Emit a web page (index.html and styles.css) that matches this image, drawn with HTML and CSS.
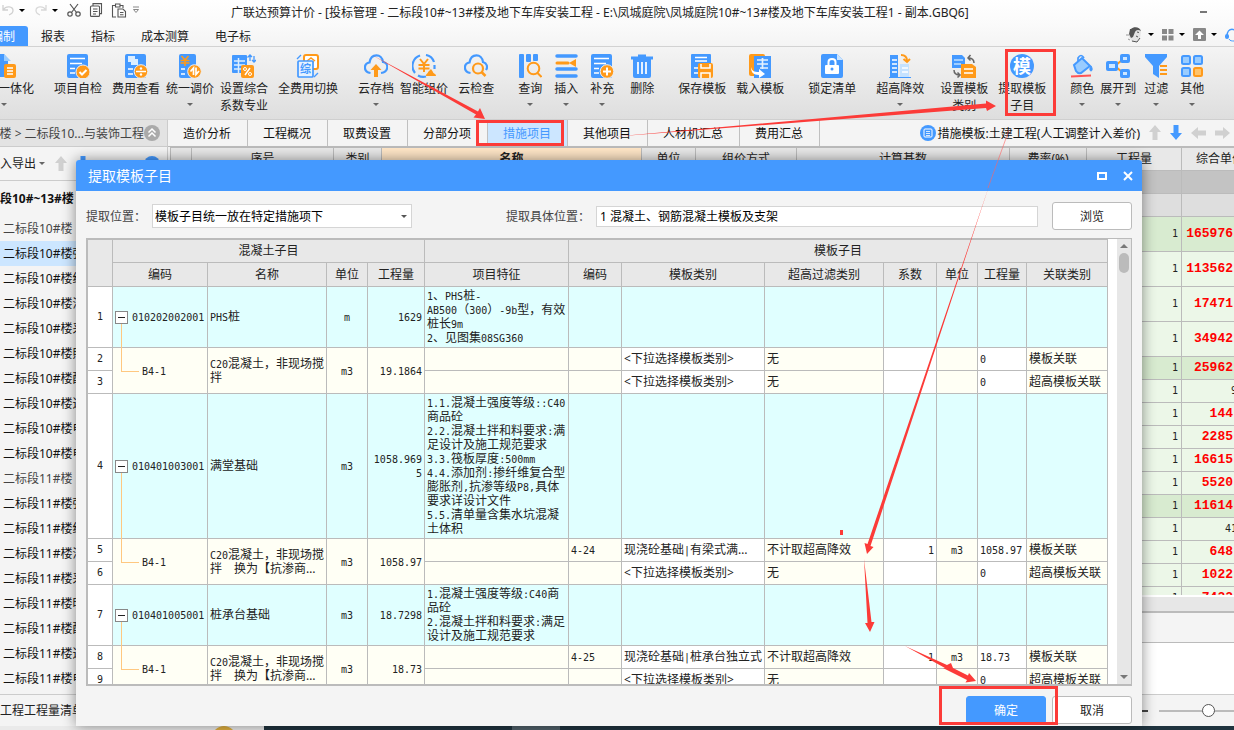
FILE: index.html
```html
<!DOCTYPE html>
<html lang="zh-CN">
<head>
<meta charset="utf-8">
<title>广联达预算计价</title>
<link rel="stylesheet" href="styles.css">
</head>
<body>
<div class="app">
  <header class="titlebar">
    <div class="quick">
      <button aria-label="撤销"><svg width="14" height="14" viewBox="0 0 14 14"><path d="M2 2v5h5M2.500 6.500C5 2.500 12 3 12 7.500c0 2-1.500 3.500-4 4.500" fill="none" stroke="#d0d0d0" stroke-width="1.300"/></svg></button>
      <i class="caret dark"></i>
      <button aria-label="恢复"><svg width="14" height="14" viewBox="0 0 14 14"><path d="M12 2v5H7M11.500 6.500C9 2.500 2 3 2 7.500c0 2 1.500 3.500 4 4.500" fill="none" stroke="#d8d8d8" stroke-width="1.300"/></svg></button>
      <i class="caret dark"></i>
      <button aria-label="剪切"><svg width="14" height="14" viewBox="0 0 14 14"><g fill="none" stroke="#555" stroke-width="1.200"><path d="M3 1l6.500 8.500M11 1L4.500 9.500"/><circle cx="3" cy="11" r="2.200"/><circle cx="11" cy="11" r="2.200"/></g></svg></button>
      <button aria-label="复制"><svg width="14" height="14" viewBox="0 0 14 14"><g fill="none" stroke="#555" stroke-width="1.100"><path d="M4 3V.600h8.500v10H11"/><rect x="1.500" y="3" width="9" height="10.400" rx="1"/><path d="M4 6h4.500M4 8.500h4.500M4 11h3"/></g></svg></button>
      <button aria-label="粘贴"><svg width="16" height="15" viewBox="0 0 16 15"><g fill="none" stroke="#555" stroke-width="1.100"><path d="M5 14H1.500V2.500h3M9 2.500h3V5M4.500 1h4.500v3H4.500z"/><path d="M7 6h5l2.500 2.500V14H7zM9 9.500h3.500M9 11.700h3.500"/></g></svg></button>
      <svg width="8" height="8" viewBox="0 0 8 8"><path d="M1 1h6M1.500 3.500h5L4 6.500z" fill="none" stroke="#888"/></svg>
    </div>
    <h1>广联达预算计价 - [投标管理 - 二标段10#~13#楼及地下车库安装工程 - E:\凤城庭院\凤城庭院10#~13#楼及地下车库安装工程1 - 副本.GBQ6]</h1>
    <button class="minimize" aria-label="最小化"></button>
  </header>

  <nav class="menubar">
    <a href="#" class="active">编制</a><a href="#">报表</a><a href="#">指标</a><a href="#">成本测算</a><a href="#">电子标</a>
    <div class="tools">
      <svg width="17" height="17" viewBox="0 0 17 17"><path d="M5 3c3-3 9-2 10 2l-1 7-3 4H6l-3-5z" fill="#e4e4e4"/><path d="M5 3c3-3 9-2 10 2-3-2-5-1-6 1L7 11l-2 1-2-4 1-5z" fill="#555"/><path d="M11 6l2 .500M10 10l2 1M6 15l5 1 3-4" stroke="#555" fill="none"/><path d="M0 9h3M2 13l2 1" stroke="#999"/></svg>
      <i class="caret dark"></i>
      <svg width="12" height="12" viewBox="0 0 12 12"><path d="M0 0h5v5H0zM6.500 0h5v5h-5zM0 6.500h5v5H0zM6.500 6.500h5v5h-5z" fill="#888"/></svg>
      <i class="caret dark"></i>
      <svg width="13" height="13" viewBox="0 0 13 13"><rect width="13" height="13" rx="1" fill="#888"/><path d="M6.500 2.500L11 7H8v4H5V7H2z" fill="#fff"/></svg>
      <i class="caret dark"></i>
      <svg width="14" height="14" viewBox="0 0 14 14"><path d="M2 8c0-9 10-9 10 0" fill="none" stroke="#49f" stroke-width="1.500"/><rect y="6" width="4" height="5" rx="2" fill="#49f"/><path d="M4 11c1 2 3 2 5 2" stroke="#49f" fill="none"/></svg>
    </div>
  </nav>

  <div class="ribbon">
    <button class="first"><svg viewBox="0 0 24 24"><path d="M2 0h10l4 5v18H2z" fill="#49f"/><path d="M12 0l7 7h-7z" fill="#9cf"/><rect x="12" y="10" width="12" height="14" rx="2" fill="#ff9a1a"/><path d="M15 14h6M15 17h6M15 20h6" stroke="#fff" stroke-width="1.500"/></svg><span>量价一体化</span><i class="caret"></i></button>
    <button class="g20"><svg viewBox="0 0 24 24"><rect x="1" width="21" height="24" rx="2" fill="#49f"/><path d="M4 4.500h15M4 9.500h12M4 14.500h5M4 19h5" stroke="#fff" stroke-width="1.600"/><circle cx="17" cy="18" r="7" fill="#ff9a1a" stroke="#eee"/><path d="M13.500 18l2.500 2.500 4.500-4.500" fill="none" stroke="#fff" stroke-width="2"/></svg><span>项目自检</span></button>
    <button class="g10"><svg viewBox="0 0 24 24"><rect x="1" width="21" height="24" rx="2" fill="#49f"/><path d="M4 2h7v3h3v6H7V8H4z" fill="#dceeff"/><path d="M4 15h5M4 20h5" stroke="#fff" stroke-width="1.600"/><circle cx="17" cy="17.500" r="6.800" fill="#ff9a1a" stroke="#eee"/><path d="M12 17.500h10" stroke="#fff" stroke-width="1.500"/><circle cx="17" cy="14.500" r="1.200" fill="#fff"/><circle cx="17" cy="20.500" r="1.200" fill="#fff"/></svg><span>费用查看</span></button>
    <button class="g6"><svg viewBox="0 0 24 24"><rect x="1" width="17" height="24" rx="2" fill="#49f"/><path d="M3.500 2l3.500 4 3.500-4M2.500 6.500h9M2.500 9h9M7 6v6" fill="none" stroke="#ff9a1a" stroke-width="1.600"/><path d="M3 15h4M3 20h4" stroke="#fff" stroke-width="1.600"/><circle cx="16.500" cy="17.500" r="6.800" fill="#ff9a1a" stroke="#eee"/><path d="M15.500 21v-7l-3 3.500M18 13.500v7l3-3.500" fill="none" stroke="#fff" stroke-width="1.700"/></svg><span>统一调价</span><i class="caret"></i></button>
    <button class="g6"><svg viewBox="0 0 24 24"><rect x="0" y="1" width="15" height="18" rx="1" fill="#49f"/><path d="M2 7h11M2 11h11M2 15h7M6.500 4v15" stroke="#dceeff" stroke-width="1.500"/><path d="M18 1v6M15.500 3.500L18 1l2 2M22 2v6M20 6l2 2 2-2" fill="none" stroke="#49f" stroke-width="1.300"/><rect x="9" y="11" width="13" height="13" rx="2" fill="#ff9a1a"/><path d="M13 21l5-7" stroke="#fff" stroke-width="1.500"/><circle cx="13" cy="15" r="1.500" fill="none" stroke="#fff"/><circle cx="18" cy="20" r="1.500" fill="none" stroke="#fff"/></svg><span>设置综合<br>系数专业</span></button>
    <button class="g10"><svg viewBox="0 0 24 24"><rect x="8" y="1" width="14" height="14" rx="2" fill="#fff" stroke="#ff9a1a" stroke-width="2"/><path d="M11 7l4-3 4 3M12 8h6" stroke="#ff9a1a" stroke-width="1.500" fill="none"/><rect x="2" y="7" width="15" height="16" rx="1" fill="#e6f2ff" stroke="#49f" stroke-width="1.700"/><text x="4" y="19" font-size="11" font-weight="700" fill="#49f">综</text><path d="M1 5l4-4M18 23l4-4" stroke="#49f" stroke-width="1.300"/></svg><span>全费用切换</span></button>
    <button class="g20"><svg viewBox="0 0 24 24"><path d="M6.500 19C-1 18-.500 9.500 5.500 8.500 7-1 18-1 19 8c6 1 6 10-2 11" fill="none" stroke="#49f" stroke-width="2.200"/><path d="M12 10l5.500 6H14v7h-4v-7H6.500z" fill="#ff9a1a"/></svg><span>云存档</span><i class="caret"></i></button>
    <button class="g6"><svg viewBox="0 0 24 24"><path d="M8 1.500A11 11 0 0 0 3 19M14 1a10.500 10.500 0 0 1 8 7M22.500 11v4M6 21.500a11 11 0 0 0 8 1" fill="none" stroke="#49f" stroke-width="2.200"/><path d="M8 5l4 5 4-5M6.500 11h11M6.500 14.500h11M12 10v8" fill="none" stroke="#ff9a1a" stroke-width="2"/><path d="M14 22c0-3 2-2 2-4l3-3 2 3c0 2 3 1 3 4z" fill="#ff9a1a"/></svg><span>智能组价</span></button>
    <button class="g10"><svg viewBox="0 0 24 24"><path d="M6.500 19C-1 18-.500 9.500 5.500 8.500 7-1 18-1 19 8c4 1 5 5 3 8" fill="none" stroke="#49f" stroke-width="2.200"/><circle cx="14" cy="14.500" r="5" fill="none" stroke="#ff9a1a" stroke-width="2.200"/><path d="M17.500 18l4 4" stroke="#ff9a1a" stroke-width="2.500"/></svg><span>云检查</span></button>
    <button class="g24"><svg viewBox="0 0 24 24"><rect x="1" width="5" height="24" rx="1" fill="#49f"/><rect x="8" width="5" height="8" rx="1" fill="#49f"/><rect x="15" width="5" height="7" rx="1" fill="#49f"/><circle cx="15.500" cy="14.500" r="5.800" fill="none" stroke="#ff9a1a" stroke-width="2"/><path d="M19.500 19l4 4" stroke="#ff9a1a" stroke-width="2"/></svg><span>查询</span><i class="caret"></i></button>
    <button class="g12"><svg viewBox="0 0 24 24"><path d="M3 2h19M3 15h19M3 22h19" stroke="#49f" stroke-width="3.500" stroke-linecap="round"/><path d="M3 9h11" stroke="#ff9a1a" stroke-width="3" stroke-linecap="round"/><path d="M15 9l7-4v8z" fill="#ff9a1a"/></svg><span>插入</span><i class="caret"></i></button>
    <button class="g12"><svg viewBox="0 0 24 24"><rect x="1" width="21" height="24" rx="2" fill="#49f"/><path d="M4 4.500h15M4 9.500h12M4 14.500h5M4 19h5" stroke="#fff" stroke-width="1.600"/><circle cx="17" cy="17.500" r="6.800" fill="#ff9a1a" stroke="#eee"/><path d="M17 13.500v8M13 17.500h8" stroke="#fff" stroke-width="2"/></svg><span>补充</span><i class="caret"></i></button>
    <button class="g16"><svg viewBox="0 0 24 24"><path d="M1 4h22M8 2h8" stroke="#49f" stroke-width="3"/><path d="M3 5h18v17q0 2-2 2H5q-2 0-2-2z" fill="#49f"/><path d="M8 8v12M12 8v12M16 8v12" stroke="#fff" stroke-width="1.700"/></svg><span>删除</span></button>
    <button class="g24"><svg viewBox="0 0 24 24"><rect x="1" width="20" height="24" rx="1" fill="#49f"/><path d="M5 3.500h12M5 7h12M4 14h4M4 19h4" stroke="#fff" stroke-width="1.500"/><rect x="8" y="9" width="15" height="15" rx="2" fill="#ff9a1a"/><path d="M11 10v4h9v-4M11 24v-5h9v5" fill="none" stroke="#fff" stroke-width="1.500"/></svg><span>保存模板</span></button>
    <button class="g10"><svg viewBox="0 0 24 24"><rect x="1" width="16" height="22" rx="2" fill="#ff9a1a"/><path d="M6 2h17v22H6z" fill="#49f"/><path d="M9 6h11M9 10h11M12 14h8M14.500 4v11" stroke="#e5f2ff" stroke-width="1.700"/><path d="M3 13c1 4 3 5 8 5v-3l6 5-6 4v-3C5 21 3 18 3 13z" fill="#fff"/></svg><span>载入模板</span></button>
    <button class="g24"><svg viewBox="0 0 24 24"><path d="M3 0h14l6 6v16q0 2-2 2H3q-2 0-2-2V2q0-2 2-2z" fill="#49f"/><path d="M17 0l6 6h-6z" fill="#cce5ff"/><rect x="5" y="11" width="14" height="9" rx="1" fill="#fff"/><path d="M8.500 11V8q0-3 3.500-3t3.500 3v3" fill="none" stroke="#fff" stroke-width="2"/><circle cx="12" cy="15" r="1.500" fill="#49f"/></svg><span>锁定清单</span></button>
    <button class="g20"><svg viewBox="0 0 24 24"><path d="M2 1h8v22H2z" fill="#49f"/><path d="M12 10h9v13h-9z" fill="#c5e2ff"/><path d="M4 6h5M4 10h5M4 14h5M4 18h5M14 14h6M14 18h6" stroke="#fff" stroke-width="1.700"/><path d="M1 23.500h22" stroke="#49f"/><path d="M13 1c4 0 6 2 6 6M15.500 5l3.500 3 3-3" fill="none" stroke="#ff9a1a" stroke-width="2"/></svg><span>超高降效</span><i class="caret"></i></button>
    <button class="g16"><svg viewBox="0 0 24 24"><path d="M0 1h10l3 3v10H0z" fill="#49f"/><path d="M2 6h9M2 10h7" stroke="#bde0ff" stroke-width="1.500"/><path d="M9 10h11l4 3v11H9z" fill="#ff9a1a"/><path d="M12 15h9M12 19h9" stroke="#fff" stroke-width="1.500"/><path d="M16 4c4 0 6 1 6 5M18.500 1L16 4l2.500 2.500M2 16c0 4 2 5 6 5M5.500 18.500L8 21l-2.500 2.500" fill="none" stroke="#666" stroke-width="1.500"/></svg><span>设置模板<br>类别</span></button>
    <button class="g10"><svg viewBox="0 0 24 24"><circle cx="12" cy="12" r="12" fill="#49f"/><text x="3" y="18.500" font-size="18" font-weight="700" fill="#fff">模</text></svg><span>提取模板<br>子目</span></button>
    <button class="g24"><svg viewBox="0 0 24 24"><path d="M4 11l8-7 8 8-9 7q-3 1-5-2z" fill="#9cf" stroke="#49f" stroke-width="2"/><path d="M8 8V4q3-5 6 0" fill="none" stroke="#49f" stroke-width="1.700"/><path d="M21 12c2 3 1 5 0 5s-2-2 0-5z" fill="#49f" stroke="#49f"/><path d="M1 22.500l20-1" stroke="#f55" stroke-width="2"/></svg><span>颜色</span><i class="caret"></i></button>
    <button class="g6"><svg viewBox="0 0 24 24"><path d="M9 12l7-6M9 12l7 6" stroke="#ff9a1a" stroke-width="2"/><rect x="0" y="7" width="12" height="10" rx="2" fill="#49f"/><rect x="14" y="0" width="10" height="9" rx="2" fill="#49f"/><rect x="14" y="15" width="10" height="9" rx="2" fill="#49f"/><path d="M3 10h6v4H3zM17 3h4v3h-4zM17 18h4v3h-4z" fill="#cfe7ff"/></svg><span>展开到</span><i class="caret"></i></button>
    <button class="g8"><svg viewBox="0 0 24 24"><path d="M1 0h22v3l-8 9v12l-6-4v-8L1 3z" fill="#49f"/><path d="M16 12h7M16 16h7M16 20h7" stroke="#ff9a1a" stroke-width="2"/></svg><span>过滤</span><i class="caret"></i></button>
    <button class="g12"><svg viewBox="0 0 24 24"><g fill="#9cf" stroke="#49f" stroke-width="2"><rect x="2" y="2" width="8" height="8" rx="1.500"/><rect x="14" y="2" width="8" height="8" rx="1.500"/><rect x="2" y="14" width="8" height="8" rx="1.500"/></g><rect x="14" y="14" width="8" height="8" rx="1.500" fill="#ffc36b" stroke="#ff9a1a" stroke-width="2"/></svg><span>其他</span><i class="caret"></i></button>
  </div>

  <div class="body">
    <aside class="side">
      <div class="crumb"><span>10#楼 &gt; 二标段10...与装饰工程</span><svg width="16" height="16" viewBox="0 0 16 16"><circle cx="8" cy="8" r="8" fill="#aaa"/><path d="M4.500 7.500L8 4l3.500 3.500M4.500 11.500L8 8l3.500 3.500" fill="none" stroke="#fff" stroke-width="1.500"/></svg></div>
      <div class="side-tools">
        <button class="io">导入导出<i class="caret"></i></button>
        <svg width="12" height="16" viewBox="0 0 12 16"><path d="M6 0l6 7H8.500v8h-5V7H0z" fill="#d0d0d0"/></svg>
        <svg width="12" height="16" viewBox="0 0 12 16"><path d="M6 16l6-7H8.500V0h-5v9H0z" fill="#49f"/></svg>
        <svg class="right" width="16" height="16" viewBox="0 0 16 16"><circle cx="8" cy="8" r="8" fill="#49f"/></svg>
      </div>
      <ul class="tree">
        <li class="root"><span>二标段10#~13#楼</span></li>
        <li class="dim">二标段10#楼</li>
        <li class="sel">二标段10#楼强电</li>
        <li>二标段10#楼给排水</li>
        <li>二标段10#楼消防</li>
        <li>二标段10#楼采暖</li>
        <li>二标段10#楼照明</li>
        <li>二标段10#楼配电</li>
        <li>二标段10#楼通风</li>
        <li>二标段10#楼电气</li>
        <li>二标段10#楼电梯</li>
        <li class="dim">二标段11#楼</li>
        <li>二标段11#楼强电</li>
        <li>二标段11#楼给排水</li>
        <li>二标段11#楼消防</li>
        <li>二标段11#楼采暖</li>
        <li>二标段11#楼明装</li>
        <li>二标段11#楼配电</li>
        <li>二标段11#楼通风</li>
        <li>二标段11#楼电气</li>
      </ul>
    </aside>

    <main class="main">
      <div class="tabs">
        <button>造价分析</button><button>工程概况</button><button>取费设置</button><button>分部分项</button><button class="on">措施项目</button><button>其他项目</button><button>人材机汇总</button><button>费用汇总</button>
        <div class="tpl">
          <svg width="16" height="16" viewBox="0 0 16 16"><circle cx="8" cy="8" r="8" fill="#49f"/><rect x="4" y="4" width="8" height="8" rx="1" fill="none" stroke="#fff"/><path d="M6 6.500h4M6 8.500h4M6 10.500h4" stroke="#fff" stroke-width=".8"/></svg>
          <span>措施模板:土建工程(人工调整计入差价)</span>
          <svg width="12" height="16" viewBox="0 0 12 16"><path d="M6 0l6 7H8.500v8h-5V7H0z" fill="#d0d0d0"/></svg>
          <svg width="12" height="16" viewBox="0 0 12 16"><path d="M6 15l6-7H8.500V0h-5v8H0z" fill="#49f"/></svg>
          <svg width="15" height="12" viewBox="0 0 15 12"><path d="M0 6l7-6v3.500h8v5H7V12z" fill="#d0d0d0"/></svg>
          <svg width="15" height="12" viewBox="0 0 15 12"><path d="M15 6L8 0v3.500H0v5h8V12z" fill="#d0d0d0"/></svg>
        </div>
      </div>
      <div class="sheet">
        <table>
          <colgroup><col class="s1"><col class="s2"><col class="s3"><col class="s4"><col class="s5"><col class="s6"><col class="s7"><col class="s8"><col class="s9"><col class="s10"></colgroup>
          <thead><tr><th></th><th>序号</th><th>类别</th><th class="name">名称</th><th>单位</th><th>组价方式</th><th>计算基数</th><th>费率(%)</th><th>工程量</th><th>综合单价</th></tr></thead>
          <tbody>
            <tr class="gray"><td colspan="8"></td><td></td><td></td></tr>
            <tr class="pale"><td colspan="8"></td><td></td><td></td></tr>
            <tr class="tall deep"><td colspan="8"></td><td>1</td><td class="red">165976</td></tr>
            <tr class="tall"><td colspan="8"></td><td>1</td><td class="red">113562</td></tr>
            <tr class="tall"><td colspan="8"></td><td>1</td><td class="red">17471</td></tr>
            <tr class="tall"><td colspan="8"></td><td>1</td><td class="red">34942</td></tr>
            <tr class="deep"><td colspan="8"></td><td>1</td><td class="red">25962</td></tr>
            <tr><td colspan="8"></td><td>1</td><td class="cut">9</td></tr>
            <tr><td colspan="8"></td><td>1</td><td class="red">144</td></tr>
            <tr><td colspan="8"></td><td>1</td><td class="red">2285</td></tr>
            <tr><td colspan="8"></td><td>1</td><td class="red">16615</td></tr>
            <tr><td colspan="8"></td><td>1</td><td class="red">5520</td></tr>
            <tr class="deep"><td colspan="8"></td><td>1</td><td class="red">11614</td></tr>
            <tr><td colspan="8"></td><td>1</td><td class="cut">41</td></tr>
            <tr><td colspan="8"></td><td>1</td><td class="red">648</td></tr>
            <tr><td colspan="8"></td><td>1</td><td class="red">1022</td></tr>
            <tr><td colspan="8"></td><td>1</td><td class="red">7422</td></tr>
          </tbody>
        </table>
      </div>
      <div class="hscroll"></div>
      <div class="strip"></div>
      <div class="detail"></div>
    </main>
  </div>

  <footer class="status"><span class="st">建筑工程工程量清单</span><div class="zoom"><i></i><input type="range" value="50" aria-label="缩放"></div></footer>
  <div class="taskbar"><i class="gold"></i><i class="task"></i></div>

  <section class="dialog" role="dialog" aria-labelledby="dt">
    <header><h2 id="dt">提取模板子目</h2><button aria-label="最大化"><svg width="10" height="8" viewBox="0 0 10 8"><path d="M1 1h8v6H1z" fill="none" stroke="#fff" stroke-width="2"/></svg></button><button aria-label="关闭"><svg width="10" height="10" viewBox="0 0 10 10"><path d="M1 1l8 8M9 1L1 9" stroke="#fff" stroke-width="2"/></svg></button></header>
    <div class="form">
      <label for="pos">提取位置：</label>
      <div class="pick"><select id="pos"><option>模板子目统一放在特定措施项下</option></select></div>
      <label for="spec" class="second">提取具体位置：</label>
      <input id="spec" type="text" value="1 混凝土、钢筋混凝土模板及支架">
      <button class="btn">浏览</button>
    </div>
    <div class="gridbox">
      <div class="gridview">
        <table>
          <colgroup><col class="c1"><col class="c2"><col class="c3"><col class="c4"><col class="c5"><col class="c6"><col class="c7"><col class="c8"><col class="c9"><col class="c7"><col class="c4"><col class="c12"><col class="c13"></colgroup>
          <thead>
            <tr><th rowspan="2"></th><th colspan="4">混凝土子目</th><th></th><th colspan="7">模板子目</th></tr>
            <tr class="h2"><th>编码</th><th>名称</th><th>单位</th><th>工程量</th><th>项目特征</th><th>编码</th><th>模板类别</th><th>超高过滤类别</th><th>系数</th><th>单位</th><th>工程量</th><th>关联类别</th></tr>
          </thead>
          <tbody>
            <tr class="item"><th>1</th><td class="code"><button aria-label="折叠"></button><b>010202002001</b></td><td><b>PHS</b>桩</td><td class="c"><b>m</b></td><td class="r"><b>1629</b></td><td><b>1</b>、<b>PHS</b>桩<b>-</b><br><b>AB500</b>（<b>300</b>）<b>-9b</b>型，有效<br>桩长<b>9m</b><br><b>2</b>、见图集<b>08SG360</b></td><td></td><td></td><td></td><td></td><td></td><td></td><td></td></tr>
            <tr><th>2</th><td rowspan="2" class="leaf"><b>B4-1</b></td><td rowspan="2"><b>C20</b>混凝土，非现场搅<br>拌</td><td rowspan="2" class="c"><b>m3</b></td><td rowspan="2" class="r"><b>19.1864</b></td><td></td><td></td><td class="w">&lt;下拉选择模板类别&gt;</td><td>无</td><td class="w"></td><td></td><td class="w"><b>0</b></td><td>模板关联</td></tr>
            <tr><th>3</th><td></td><td></td><td class="w">&lt;下拉选择模板类别&gt;</td><td>无</td><td class="w"></td><td></td><td class="w"><b>0</b></td><td>超高模板关联</td></tr>
            <tr class="item"><th>4</th><td class="code"><button aria-label="折叠"></button><b>010401003001</b></td><td>满堂基础</td><td class="c"><b>m3</b></td><td class="r"><b>1058.969<br>5</b></td><td><b>1.1.</b>混凝土强度等级<b>::C40</b><br>商品砼<br><b>2.2.</b>混凝土拌和料要求<b>:</b>满<br>足设计及施工规范要求<br><b>3.3.</b>筏板厚度<b>:500mm</b><br><b>4.4.</b>添加剂<b>:</b>掺纤维复合型<br>膨胀剂<b>,</b>抗渗等级<b>P8,</b>具体<br>要求详设计文件<br><b>5.5.</b>清单量含集水坑混凝<br>土体积</td><td></td><td></td><td></td><td></td><td></td><td></td><td></td></tr>
            <tr><th>5</th><td rowspan="2" class="leaf"><b>B4-1</b></td><td rowspan="2"><b>C20</b>混凝土，非现场搅<br>拌　换为【抗渗商…</td><td rowspan="2" class="c"><b>m3</b></td><td rowspan="2" class="r"><b>1058.97</b></td><td></td><td><b>4-24</b></td><td class="w">现浇砼基础<b>|</b>有梁式满…</td><td>不计取超高降效</td><td class="w r"><b>1</b></td><td class="c"><b>m3</b></td><td class="w"><b>1058.97</b></td><td>模板关联</td></tr>
            <tr><th>6</th><td></td><td></td><td class="w">&lt;下拉选择模板类别&gt;</td><td>无</td><td class="w"></td><td></td><td class="w"><b>0</b></td><td>超高模板关联</td></tr>
            <tr class="item"><th>7</th><td class="code"><button aria-label="折叠"></button><b>010401005001</b></td><td>桩承台基础</td><td class="c"><b>m3</b></td><td class="r"><b>18.7298</b></td><td><b>1.</b>混凝土强度等级<b>:C40</b>商<br>品砼<br><b>2.</b>混凝土拌和料要求<b>:</b>满足<br>设计及施工规范要求</td><td></td><td></td><td></td><td></td><td></td><td></td><td></td></tr>
            <tr><th>8</th><td rowspan="2" class="leaf"><b>B4-1</b></td><td rowspan="2"><b>C20</b>混凝土，非现场搅<br>拌　换为【抗渗商…</td><td rowspan="2" class="c"><b>m3</b></td><td rowspan="2" class="r"><b>18.73</b></td><td></td><td><b>4-25</b></td><td class="w">现浇砼基础<b>|</b>桩承台独立式</td><td>不计取超高降效</td><td class="w r"><b>1</b></td><td class="c"><b>m3</b></td><td class="w"><b>18.73</b></td><td>模板关联</td></tr>
            <tr><th>9</th><td></td><td></td><td class="w">&lt;下拉选择模板类别&gt;</td><td>无</td><td class="w"></td><td></td><td class="w"><b>0</b></td><td>超高模板关联</td></tr>
          </tbody>
        </table>
      </div>
      <div class="vscroll"><i class="up"></i><i class="thumb"></i><i class="down"></i></div>
    </div>
    <div class="actions"><button class="btn primary">确定</button><button class="btn">取消</button></div>
  </section>

  <svg class="marks" viewBox="0 0 1234 730" width="1234" height="730" aria-hidden="true">
    <g fill="none" stroke="#fc3b38" stroke-width="3"><path d="M477.500 121.500h85v23h-85z"/><path d="M1006.500 50.500h48v64h-48z"/><path d="M940.500 687.500h116v36h-116z"/></g>
    <g fill="#fc3b38">
      <path d="M372 55L478 111.500 480 108 485 119 473.500 117.500 476 114.500z"/>
      <path d="M610 137L986 103.500 986 100.500 996 106 987 111 986 108z"/>
      <path d="M989 186L870.500 546 873.500 547 867 554 864.500 543 867.500 544z"/>
      <path d="M864 559L867.500 623 865 623 870 632 874.500 622 871.500 622z"/>
      <path d="M905 646L945 668 943 668 967 680 965.500 682.500 976 681 969 673 968 675.500 953 668 951 663 947 665z"/>
      <path d="M840 530h3v5h-3z"/>
    </g>
    <path d="M1009 130L988 188" stroke="#f66" stroke-width="1" opacity=".6"/>
  </svg>
</div>
</body>
</html>
```
FILE: styles.css
```css
* { box-sizing: border-box; }
body { margin: 0; font: 12px/17px "Noto Sans", "Noto Sans CJK SC", sans-serif; color: #222; background: #f4f4f4; }
button { font: inherit; color: inherit; background: none; border: 0; padding: 0; }
svg { display: block; flex: none; }
h1, h2 { margin: 0; font-weight: 400; }
.app { position: relative; height: 100vh; overflow: hidden; display: flex; flex-direction: column; }

.caret { flex: none; width: 0; height: 0; border: 3px solid transparent; border-top-color: #666; border-bottom: 0; }
.caret.dark { border-top-color: #000; }

.titlebar { flex: none; height: 24px; display: flex; align-items: center; background: linear-gradient(#fff, #fafafa); }
.quick { width: 231px; display: flex; align-items: center; gap: 5px; padding: 0 0 4px 1px; }
.quick .caret { margin: 0 4px 0 -1px; }
.quick button + button { margin-left: 3px; }
.titlebar h1 { flex: 1; font-size: 12px; white-space: nowrap; }
.minimize { width: 7px; height: 2px; background: #777; margin-right: 27px; }

.menubar { flex: none; height: 23px; padding-top: 2px; margin-left: -22px; display: flex; border-bottom: 1px solid #d2d2d2; background: linear-gradient(#fafafa, #f4f4f4); }
.menubar a { padding: 2px 13px; color: #222; text-decoration: none; }
.menubar .active { background: #49f; color: #fff; border-radius: 0 3px 0 0; }
.tools { margin-left: auto; margin-right: -5px; display: flex; align-items: center; gap: 8px; padding-bottom: 3px; }
.tools .caret { margin: 0 0 0 -3px; }

.ribbon { flex: none; height: 73px; padding-top: 7px; display: flex; align-items: flex-start; background: linear-gradient(#f4f4f4, #dedede); border-bottom: 1px solid #cfcfcf; }
.ribbon button { flex: none; display: flex; flex-direction: column; align-items: center; text-align: center; white-space: nowrap; }
.ribbon svg { width: 24px; height: 24px; margin-bottom: 2px; }
.ribbon .caret { margin-top: 6px; }
.ribbon .first { margin-left: -26px; }
.g6 { margin-left: 6px; } .g8 { margin-left: 8px; } .g10 { margin-left: 10px; } .g12 { margin-left: 12px; }
.g16 { margin-left: 16px; } .g20 { margin-left: 20px; } .g24 { margin-left: 24px; }

.body { flex: 1; min-height: 0; display: flex; }
.side { width: 168px; flex: none; overflow: hidden; border-right: 1px solid #ccc; }
.crumb { height: 27px; display: flex; align-items: center; justify-content: flex-end; padding-right: 7px; background: #e3e3e3; white-space: nowrap; color: #444; border-bottom: 1px solid #ccc; }
.side-tools { height: 34px; display: flex; align-items: center; gap: 10px; padding-right: 7px; margin-left: -12px; border-bottom: 1px solid #ccc; }
.io { display: flex; align-items: center; gap: 3px; white-space: nowrap; }
.side-tools .right { margin-left: auto; }
.tree { list-style: none; margin: 0; padding: 0; }
.tree li { height: 25px; line-height: 25px; padding-left: 3px; white-space: nowrap; color: #111; }
.tree .root { height: 35px; line-height: 35px; font-weight: 700; padding: 0; margin-left: -24px; }
.tree .dim { color: #444; }
.tree .sel { background: #cce6ff; }

.main { flex: 1; min-width: 0; display: flex; flex-direction: column; }
.tabs { flex: none; height: 27px; display: flex; border-bottom: 1px solid #bbb; background: #f4f4f4; }
.tabs button { padding: 0 16px 0 15px; border-right: 1px solid #c0c0c0; white-space: nowrap; color: #111; }
.tabs .on { background: #cce6ff; color: #49f; }
.tpl { margin-left: auto; display: flex; align-items: center; gap: 9px; padding-right: 4px; white-space: nowrap; color: #111; }
.tpl > :first-child { margin-right: -7px; }
.sheet { flex: 1; min-height: 0; overflow: hidden; padding-left: 2px; border-bottom: 2px solid #fff; }
.sheet table { width: calc(100% + 24px); border-collapse: collapse; table-layout: fixed; }
.sheet td, .sheet th { height: 23px; padding: 0 3px; border: 1px solid #bbb; line-height: 18px; }
.sheet th { background: #e8e8e8; font-weight: 400; white-space: nowrap; }
.sheet .name { background: #ffe6c7; font-weight: 700; }
.sheet td { background: #ecf7e8; text-align: right; font: 10px/18px "DejaVu Sans Mono", monospace; }
.sheet .tall td { height: 35px; }
.sheet .deep td { background: #d8ebd0; }
.sheet .gray td { background: #c3c3c3; }
.sheet .pale td { background: #dedede; }
.sheet .red { font: 700 13px/18px "Liberation Mono", monospace; color: #f00; padding-right: 25px; }
.sheet .cut { padding-right: 21px; }
.s1 { width: 21px; } .s2 { width: 142px; } .s3 { width: 48px; } .s4 { width: 260px; } .s5 { width: 54px; }
.s6 { width: 101px; } .s7 { width: 213px; } .s8 { width: 77px; } .s9 { width: 95px; } .s10 { width: 77px; }
.hscroll { flex: none; height: 16px; background: #e7e7e7; border-bottom: 2px solid #bbb; }
.strip { flex: none; height: 30px; border-bottom: 1px solid #bbb; }
.detail { flex: none; height: 51px; background: #fff; }

.status { flex: none; height: 32px; display: flex; justify-content: space-between; align-items: center; border-top: 1px solid #ccc; white-space: nowrap; }
.st { margin-left: -24px; }
.zoom { display: flex; align-items: center; gap: 11px; margin-right: -23px; }
.zoom i { width: 8px; height: 2px; background: #444; }
.zoom input { width: 98px; margin: 0; appearance: none; height: 14px; background: linear-gradient(#bbb, #bbb) center / 100% 2px no-repeat; }
.zoom input::-webkit-slider-thumb { appearance: none; width: 13px; height: 13px; border-radius: 50%; background: #fff; border: 1px solid #555; }
.taskbar { flex: none; height: 4px; display: flex; overflow: hidden; background: linear-gradient(90deg, #eaeaea 264px, #20343f 264px); }
.gold { width: 24px; height: 24px; border-radius: 50%; background: #e0b040; margin-left: 212px; }
.task { width: 48px; background: #50616a; margin-left: 276px; }

.dialog { position: absolute; inset: 160px 92px 4px 76px; display: flex; flex-direction: column; background: #f4f4f4; border-radius: 3px 3px 0 0; box-shadow: 0 0 14px rgba(0, 0, 0, .45); }
.dialog > header { flex: none; height: 31px; display: flex; align-items: center; gap: 16px; padding: 0 9px 0 12px; color: #fff; background: #49f; border-radius: 3px 3px 0 0; }
.dialog h2 { flex: 1; font-size: 14px; }
.form { flex: none; height: 47px; padding: 3px 10px 0; display: flex; align-items: center; }
.form label { width: 66px; flex: none; color: #444; white-space: nowrap; }
.form .second { width: 90px; margin-left: 94px; }
.pick { position: relative; width: 260px; height: 24px; flex: none; }
.pick::after { content: ""; position: absolute; right: 5px; top: 11px; border: 3px solid transparent; border-top-color: #555; border-bottom: 0; pointer-events: none; }
.pick select { width: 100%; height: 24px; appearance: none; border: 1px solid #d5d5d5; border-radius: 0; background: #fff; font: inherit; color: #000; padding: 0 2px; }
.form input { flex: 1; min-width: 0; height: 21px; border: 1px solid #d5d5d5; padding: 0 3px; font: inherit; color: #000; }
.btn { width: 80px; height: 28px; flex: none; background: #fff; border: 1px solid #bbb; border-radius: 3px; color: #222; }
.form .btn { margin-left: 14px; }
.primary { background: #49f; color: #fff; border-color: #49f; }
.actions { flex: none; height: 40px; display: flex; justify-content: flex-end; align-items: center; gap: 6px; padding: 8px 10px 0; }

.gridbox { flex: 1; min-height: 0; margin: 0 10px; display: flex; border: 1px solid #bbb; border-bottom-width: 2px; background: #fff; }
.gridview { flex: 1; overflow: hidden; margin-right: 9px; }
.gridview table { width: 100%; border-collapse: collapse; table-layout: fixed; }
.gridview th, .gridview td { border: 1px solid #bbb; height: 23px; padding: 2px; line-height: 14px; font-weight: 400; white-space: nowrap; text-align: left; }
.gridview thead th { background: #e8e8e8; text-align: center; }
.gridview .h2 th { height: 24px; }
.gridview tbody th { background: #fff; text-align: center; padding: 2px 0; font: 10px/14px "DejaVu Sans Mono", monospace; }
.gridview td { background: #fffff5; }
.gridview .item td { background: #e0ffff; }
.gridview td.w { background: #fff; }
.gridview td.c { text-align: center; }
.gridview td.r { text-align: right; }
.gridview b { font: 10px/1px "DejaVu Sans Mono", monospace; }
.gridview .code, .gridview .leaf { position: relative; }
.gridview .leaf { padding-left: 29px; }
.code button { width: 13px; height: 13px; margin-right: 4px; vertical-align: middle; border: 1px solid #888; background: linear-gradient(#222, #222) center / 7px 1px no-repeat #fff; }
.code b { vertical-align: middle; }
.code::after { content: ""; position: absolute; left: 8px; top: calc(50% + 7px); bottom: -1px; border-left: 1px solid #ffc880; }
.leaf::before { content: ""; position: absolute; left: 8px; top: 0; width: 17px; height: 50%; border: solid #ffc880; border-width: 0 0 1px 1px; }
.c1 { width: 25px; } .c2 { width: 95px; } .c3 { width: 119px; } .c4 { width: 41px; } .c5 { width: 57px; } .c6 { width: 144px; }
.c7 { width: 53px; } .c8 { width: 143px; } .c9 { width: 119px; } .c12 { width: 49px; } .c13 { width: 81px; }
.vscroll { width: 14px; flex: none; display: flex; flex-direction: column; align-items: center; background: #e7e7e7; padding: 5px 0; }
.up, .down { border: 4px solid transparent; }
.up { border-bottom-color: #777; border-top: 0; }
.down { border-top-color: #777; border-bottom: 0; margin-top: auto; }
.thumb { width: 10px; height: 20px; margin-top: 5px; border-radius: 5px; background: #bbb; }

.marks { position: absolute; left: 0; top: 0; pointer-events: none; }
```
